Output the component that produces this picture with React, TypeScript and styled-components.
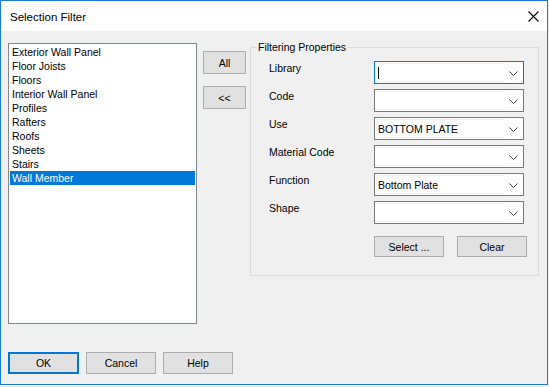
import React from 'react';
import styled, {createGlobalStyle} from "styled-components";

const GlobalStyle = createGlobalStyle`
  html, body {
    margin: 0;
    padding: 0;
    background: #f0f0f0;
  }
  * {
    box-sizing: border-box;
  }
`

const categories = [
    "Exterior Wall Panel",
    "Floor Joists",
    "Floors",
    "Interior Wall Panel",
    "Profiles",
    "Rafters",
    "Roofs",
    "Sheets",
    "Stairs",
    "Wall Member",
];

const properties: {label: string; value: string; focused?: boolean}[] = [
    {label: "Library", value: "", focused: true},
    {label: "Code", value: ""},
    {label: "Use", value: "BOTTOM PLATE"},
    {label: "Material Code", value: ""},
    {label: "Function", value: "Bottom Plate"},
    {label: "Shape", value: ""},
];

const Chevron = () => (
    <svg width="9" height="5" viewBox="0 0 9 5">
        <polyline points="0.5,0.5 4.5,4.5 8.5,0.5" fill="none" stroke="#444" strokeWidth="1"/>
    </svg>
);

const CloseIcon = () => (
    <svg width="11" height="11" viewBox="0 0 11 11">
        <path d="M0.5 0.5 L10.5 10.5 M10.5 0.5 L0.5 10.5" stroke="#000" strokeWidth="1.1"/>
    </svg>
);

const App: React.FC = () => {
    return (
        <>
            <GlobalStyle/>
            <Window>
                <TitleBar>
                    <Title>Selection Filter</Title>
                    <CloseButton><CloseIcon/></CloseButton>
                </TitleBar>
                <Body>
                    <TopRow>
                        <ListBox>
                            {categories.map(c => (
                                <ListItem key={c} $selected={c === "Wall Member"}>{c}</ListItem>
                            ))}
                        </ListBox>
                        <MoveButtons>
                            <Button $w={43} $h={23}>All</Button>
                            <Button $w={43} $h={23}>&lt;&lt;</Button>
                        </MoveButtons>
                        <Group>
                            <Caption>Filtering Properties</Caption>
                            <PropGrid>
                                {properties.map(p => (
                                    <React.Fragment key={p.label}>
                                        <PropLabel>{p.label}</PropLabel>
                                        <Combo $focused={p.focused}>
                                            <ComboField>
                                                {p.focused && <Caret/>}
                                                {p.value}
                                            </ComboField>
                                            <ComboArrow><Chevron/></ComboArrow>
                                        </Combo>
                                    </React.Fragment>
                                ))}
                            </PropGrid>
                            <GroupActions>
                                <Button $w={70} $h={21}>Select ...</Button>
                                <Button $w={70} $h={21}>Clear</Button>
                            </GroupActions>
                        </Group>
                    </TopRow>
                    <BottomRow>
                        <Button $w={71} $h={22} $default>OK</Button>
                        <Button $w={70} $h={22}>Cancel</Button>
                        <Button $w={70} $h={22}>Help</Button>
                    </BottomRow>
                </Body>
            </Window>
        </>
    );
};

const Window = styled.div`
  width: 548px;
  height: 385px;
  border: 1px solid #1a7bd6;
  display: flex;
  flex-direction: column;
  background: #f0f0f0;
  font-family: "Liberation Sans", Arial, sans-serif;
  font-size: 10.5px;
  color: #000;
`

const TitleBar = styled.div`
  height: 30px;
  background: #fff;
  display: flex;
  align-items: center;
  justify-content: space-between;
  padding: 0 8px 0 9px;
`

const Title = styled.div`
  font-family: "Liberation Sans", Arial, sans-serif;
  font-size: 11.5px;
  padding-top: 1px;
`

const CloseButton = styled.div`
  width: 11px;
  height: 11px;
  display: flex;
  margin-top: 1px;
`

const Body = styled.div`
  flex: 1;
  display: flex;
  flex-direction: column;
  padding: 12px 8px 0 7px;
`

const TopRow = styled.div`
  display: flex;
  align-items: flex-start;
  height: 281px;
`

const ListBox = styled.div`
  width: 189px;
  height: 281px;
  background: #fff;
  border: 1px solid #828790;
  padding: 1px 1px 0 1px;
  display: flex;
  flex-direction: column;
`

const ListItem = styled.div<{$selected?: boolean}>`
  height: 14px;
  line-height: 14px;
  padding-left: 2px;
  white-space: nowrap;
  background: ${p => p.$selected ? "#0078d7" : "transparent"};
  color: ${p => p.$selected ? "#fff" : "#000"};
`

const MoveButtons = styled.div`
  display: flex;
  flex-direction: column;
  gap: 12px;
  margin: 8px 0 0 6px;
`

const Button = styled.div<{$w: number; $h: number; $default?: boolean}>`
  flex: none;
  width: ${p => p.$w}px;
  height: ${p => p.$h}px;
  background: #e1e1e1;
  border: ${p => p.$default ? "2px solid #0078d7" : "1px solid #adadad"};
  display: flex;
  align-items: center;
  justify-content: center;
  font-size: 10.5px;
`

const Group = styled.div`
  position: relative;
  width: 289px;
  height: 229px;
  margin: 4px 0 0 4px;
  border: 1px solid #dcdcdc;
  padding: 13px 14px 0 18px;
`

const Caption = styled.div`
  position: absolute;
  top: -7px;
  left: 6px;
  padding: 0 1px;
  background: #f0f0f0;
  line-height: 13px;
`

const PropGrid = styled.div`
  display: grid;
  grid-template-columns: 105px 150px;
  grid-auto-rows: 23px;
  row-gap: 5px;
`

const PropLabel = styled.div`
  line-height: 13px;
  padding-top: 1px;
`

const Combo = styled.div<{$focused?: boolean}>`
  display: flex;
  align-items: stretch;
  background: #fff;
  border: 1px solid ${p => p.$focused ? "#0078d7" : "#7a7a7a"};
`

const ComboField = styled.div`
  flex: 1;
  margin: 1px 0 1px 2px;
  border-top: 1px solid #f0f0f0;
  border-bottom: 1px solid #f0f0f0;
  display: flex;
  align-items: center;
  padding-left: 1px;
  white-space: nowrap;
`

const Caret = styled.span`
  width: 1px;
  height: 12px;
  background: #000;
`

const ComboArrow = styled.div`
  width: 19px;
  display: flex;
  align-items: center;
  justify-content: center;
  padding: 1px 1px 0 0;
`

const GroupActions = styled.div`
  display: flex;
  justify-content: flex-end;
  gap: 13px;
  margin: 12px -3px 0 0;
`

const BottomRow = styled.div`
  display: flex;
  gap: 7px;
  margin: 28px 0 0 0;
`

export default App;
